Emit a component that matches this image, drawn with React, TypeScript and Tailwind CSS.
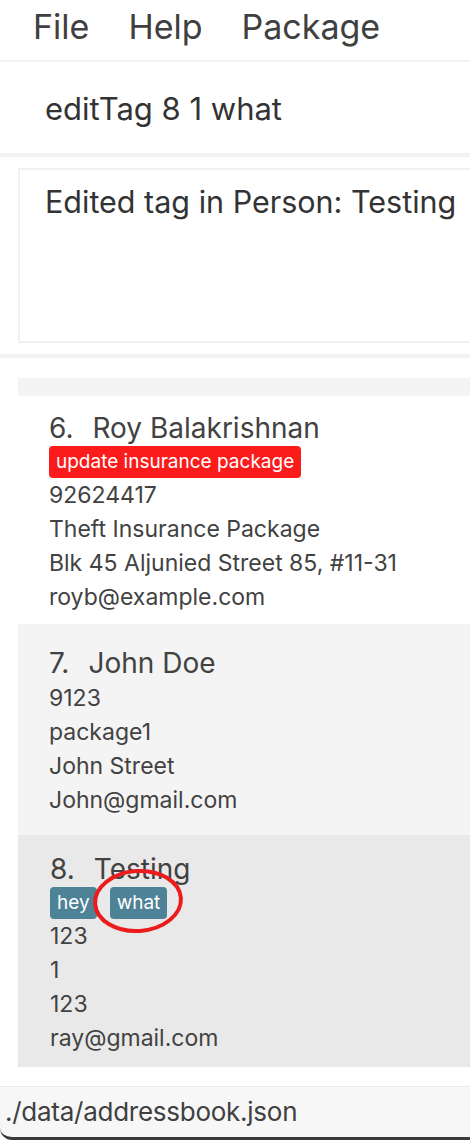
import React from 'react';

interface Person {
  index: number;
  name: string;
  tags: { label: string; color: string }[];
  lines: string[];
  rowClass: string;
  selected?: boolean;
}

const people: Person[] = [
  {
    index: 6,
    name: 'Roy Balakrishnan',
    tags: [{ label: 'update insurance package', color: 'bg-[#fc1b1b]' }],
    lines: ['92624417', 'Theft Insurance Package', 'Blk 45 Aljunied Street 85, #11-31', 'royb@example.com'],
    rowClass: 'bg-white pt-[14px] pb-[10px] pl-[31px]',
  },
  {
    index: 7,
    name: 'John Doe',
    tags: [],
    lines: ['9123', 'package1', 'John Street', 'John@gmail.com'],
    rowClass: 'bg-[#f4f4f4] pt-[21px] pb-[18px] pl-[31px]',
  },
  {
    index: 8,
    name: 'Testing',
    tags: [
      { label: 'hey', color: 'bg-[#4e8297]' },
      { label: 'what', color: 'bg-[#4e8297]' },
    ],
    lines: ['123', '1', '123', 'ray@gmail.com'],
    rowClass: 'bg-[#e9e9e9] pt-[16px] pb-[12px] pl-[32px]',
    selected: true,
  },
];

const PersonCard: React.FC<{ person: Person }> = ({ person }) => (
  <div className={`${person.rowClass} text-[#424242]`}>
    <div className="flex text-[28px] leading-[36px]">
      <span className="mr-[19px]">{person.index}.</span>
      <span>{person.name}</span>
    </div>
    {person.tags.length > 0 && (
      <div className="relative flex gap-[13px]">
        {person.tags.map((tag) => (
          <span
            key={tag.label}
            className={`${tag.color} h-[32px] rounded-[4px] px-[7px] text-[19px] leading-[32px] text-white`}
          >
            {tag.label}
          </span>
        ))}
        {person.selected && (
          // the red ring someone drew round the new tag
          <svg className="absolute left-[40px] top-[-21px]" width="96" height="70" viewBox="0 0 96 70">
            <ellipse cx="48" cy="35" rx="43" ry="30" fill="none" stroke="#ec1c1c" strokeWidth="4" transform="rotate(-4 48 35)" />
          </svg>
        )}
      </div>
    )}
    <div className="text-[23px] leading-[34px]">
      {person.lines.map((line) => (
        <div key={line + person.index}>{line}</div>
      ))}
    </div>
  </div>
);

export default function App() {
  return (
    <div className="w-[470px] h-[1140px] overflow-hidden bg-white flex flex-col font-['Inter',_sans-serif] text-[#3a3a3a]">
      {/* menu bar */}
      <div className="h-[60px] flex items-center pl-[33px] pb-[8px] gap-[39px] text-[34px] text-[#404040]">
        <span>File</span>
        <span>Help</span>
        <span>Package</span>
      </div>
      <div className="h-[2px] bg-[#f3f3f3]" />

      {/* command box */}
      <div className="h-[91px] flex items-center pl-[45px] pt-[4px] text-[31px] text-[#333]">
        editTag 8 1 what
      </div>
      <div className="h-[4px] bg-[#f3f3f3]" />

      {/* result display */}
      <div className="h-[197px] pt-[11px] pl-[18px]">
        <div className="w-[480px] h-[175px] border-2 border-[#f1f1f1] pl-[25px] pt-[12px] text-[30.5px] leading-[40px] text-[#333]">
          Edited tag in Person: Testing
        </div>
      </div>
      <div className="h-[4px] bg-[#f3f3f3]" />

      {/* person list */}
      <div className="flex-1 pt-[20px] pl-[18px]">
        <div className="w-[480px]">
          <div className="h-[18px] bg-[#f4f4f4]" />
          {people.map((p) => (
            <PersonCard key={p.index} person={p} />
          ))}
        </div>
      </div>

      {/* status bar */}
      <div className="h-[54px] bg-[#f7f7f7] border-t border-[#ececec] border-b-[3px] border-b-[#3a3a3a] rounded-bl-[12px] pl-[5px] text-[26px] tracking-[-0.01em] leading-[50px] text-[#404040]">
        ./data/addressbook.json
      </div>
    </div>
  );
}
